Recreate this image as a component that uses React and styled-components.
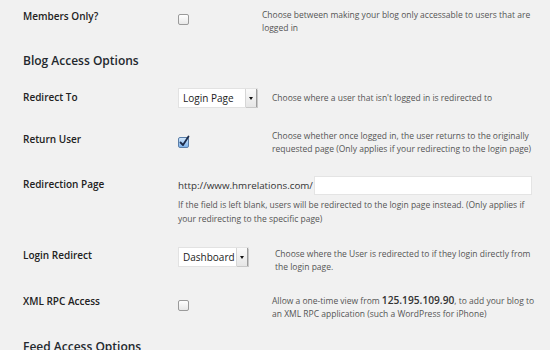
import React from 'react'
import styled, { createGlobalStyle } from 'styled-components'

const GlobalStyle = createGlobalStyle`
  html, body {
    margin: 0;
    padding: 0;
    background: #f1f1f1;
    font-family: "Open Sans", "Liberation Sans", sans-serif;
    overflow: hidden;
  }
`

const Page = styled.div`
  width: 550px;
  height: 350px;
  padding-left: 23px;
  box-sizing: border-box;
  overflow: hidden;
`

const Row = styled.div`
  display: flex;
  align-items: flex-start;
  padding: 10px 0 11px;
  &:first-child {
    padding-top: 8px;
  }
`

const Label = styled.div`
  width: 155px;
  flex: none;
  padding-top: ${p => p.$offset || 2}px;
  font-size: 10px;
  line-height: 13px;
  font-weight: 600;
  color: #222;
`

const Field = styled.div`
  width: ${p => p.$width}px;
  flex: none;
`

const Desc = styled.div`
  font-size: 8.5px;
  line-height: 13px;
  color: #555;
  width: ${p => p.$width || 266}px;
  padding-top: ${p => p.$top || 0}px;

  b {
    font-size: 10.2px;
    font-weight: 600;
    color: #333;
  }
`

const Heading = styled.h3`
  margin: 7px 0 8px;
  font-size: 12px;
  line-height: 18px;
  font-weight: 600;
  color: #23282d;
`

const Box = styled.span`
  display: block;
  margin-top: ${p => p.$top}px;
  width: 11px;
  height: 11px;
  box-sizing: border-box;
  border-radius: 2px;
  border: 1px solid ${p => (p.$checked ? '#5a7ea8' : '#9a9a9a')};
  background: ${p =>
    p.$checked
      ? 'linear-gradient(#cfe5fb, #7fb3ea)'
      : 'linear-gradient(#ffffff, #e8e8e8)'};
  position: relative;

  svg {
    position: absolute;
    left: 0;
    top: -3px;
  }
`

const Select = styled.div`
  display: flex;
  width: ${p => p.$width}px;
  height: 20px;
  box-sizing: border-box;
  background: #fff;
  border: 1px solid #e2e2e2;
  font-size: 10px;
  color: #222;
  align-items: stretch;
`

const SelectText = styled.span`
  flex: 1;
  padding-left: 4px;
  line-height: 18px;
`

const Arrow = styled.span`
  width: 10px;
  display: flex;
  align-items: center;
  justify-content: center;
  background: linear-gradient(#fafafa, #e6e6e6);
  border-left: 1px solid #d6d6d6;
  border-right: 1px solid #9c9c9c;
  box-shadow: 1px 1px 0 #c8c8c8;

  &::after {
    content: '';
    border-left: 2px solid transparent;
    border-right: 2px solid transparent;
    border-top: 3px solid #111;
  }
`

const UrlLine = styled.div`
  display: flex;
  align-items: center;
  font-size: 9.8px;
  color: #333;
`

const Input = styled.span`
  display: block;
  margin-left: 1px;
  width: 218px;
  height: 19px;
  box-sizing: border-box;
  background: #fff;
  border: 1px solid #e4e4e4;
`

const Help = styled.div`
  margin-top: 3px;
  font-size: 8.5px;
  line-height: 14px;
  color: #555;
  width: 356px;
`

function Checkbox ({ checked, top = 6 }) {
  return (
    <Box $checked={checked} $top={top}>
      {checked && (
        <svg width='11' height='12' viewBox='0 0 11 12'>
          <path d='M1.5 7.5 L4 10 L9.5 1.5' fill='none' stroke='#1c2b4a' strokeWidth='1.8' strokeLinecap='round' strokeLinejoin='round' />
        </svg>
      )}
    </Box>
  )
}

export default function App () {
  return (
    <Page>
      <GlobalStyle />
      <Row>
        <Label $offset={0}>Members Only?</Label>
        <Field $width={84}><Checkbox /></Field>
        <Desc $width={270}>Choose between making your blog only accessable to users that are logged in</Desc>
      </Row>

      <Heading>Blog Access Options</Heading>

      <Row>
        <Label $offset={3}>Redirect To</Label>
        <Field $width={94}>
          <Select $width={80}>
            <SelectText>Login Page</SelectText>
            <Arrow />
          </Select>
        </Field>
        <Desc $top={3}>Choose where a user that isn't logged in is redirected to</Desc>
      </Row>

      <Row>
        <Label $offset={4}>Return User</Label>
        <Field $width={94}><Checkbox checked top={8} /></Field>
        <Desc $width={262}>Choose whether once logged in, the user returns to the originally requested page (Only applies if your redirecting to the login page)</Desc>
      </Row>

      <Row>
        <Label $offset={2}>Redirection Page</Label>
        <div>
          <UrlLine>
            http://www.hmrelations.com/
            <Input />
          </UrlLine>
          <Help>If the field is left blank, users will be redirected to the login page instead. (Only applies if your redirecting to the specific page)</Help>
        </div>
      </Row>

      <Row>
        <Label $offset={2}>Login Redirect</Label>
        <Field $width={97}>
          <Select $width={71}>
            <SelectText>Dashboard</SelectText>
            <Arrow />
          </Select>
        </Field>
        <Desc $width={262}>Choose where the User is redirected to if they login directly from the login page.</Desc>
      </Row>

      <Row>
        <Label $offset={1}>XML RPC Access</Label>
        <Field $width={94}><Checkbox /></Field>
        <Desc $width={266}>Allow a one-time view from <b>125.195.109.90</b>, to add your blog to an XML RPC application (such a WordPress for iPhone)</Desc>
      </Row>

      <Heading>Feed Access Options</Heading>
    </Page>
  )
}
